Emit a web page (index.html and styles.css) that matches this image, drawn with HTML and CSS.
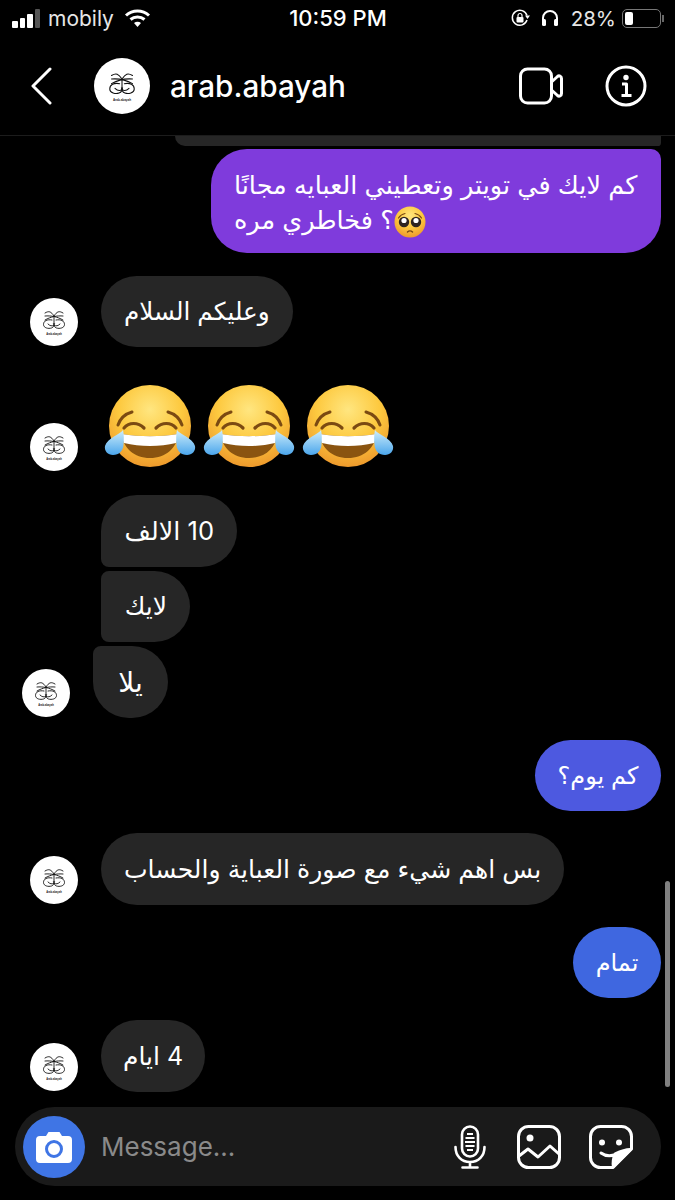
FILE: index.html
```html
<!DOCTYPE html>
<html lang="en">
<head>
    <meta charset="UTF-8">
    <meta name="viewport" content="width=device-width, initial-scale=1.0">
    <title>arab.abayah</title>
    <link rel="stylesheet" href="styles.css">
</head>
<body>
    <!-- Shared drawings -->
    <svg class="defs" width="0" height="0" aria-hidden="true">
        <defs>
            <radialGradient id="faceFill" cx="50%" cy="30%" r="70%">
                <stop offset="0" stop-color="#ffe680"/>
                <stop offset="0.55" stop-color="#fdc93f"/>
                <stop offset="1" stop-color="#ee9a2c"/>
            </radialGradient>
            <linearGradient id="tearFill" x1="0" y1="0" x2="0" y2="1">
                <stop offset="0" stop-color="#cfeefb"/>
                <stop offset="1" stop-color="#4ba6ec"/>
            </linearGradient>
            <symbol id="logo" viewBox="0 0 48 48">
                <g fill="none" stroke="#111" stroke-width="0.9" stroke-linecap="round">
                    <path d="M15 15c4-2.500 6-1.500 9 3 3-4.500 5-5.500 9-3"/>
                    <path d="M15 18c6-.5 12 .5 18 4"/>
                    <path d="M33 18c-6-.5-12 .5-18 4"/>
                    <path d="M22 22c-5-1-8.500 1-8.500 4.500 0 3.500 5 4.500 8 3.500 2-.6 3-2.500 2-4.500"/>
                    <path d="M26 22c5-1 8.500 1 8.500 4.500 0 3.500-5 4.500-8 3.500-2-.6-3-2.500-2-4.500"/>
                    <path d="M24 19v6M18 26c2 2 4 2.500 6 1 2 1.500 4 1 6-1"/>
                </g>
                <text class="logo-name" x="24" y="37" text-anchor="middle">Arab.abayah</text>
            </symbol>
            <symbol id="laugh" viewBox="0 0 92 84">
                <circle cx="46" cy="42" r="41" fill="url(#faceFill)"/>
                <g fill="none" stroke="#7b4a12" stroke-width="3" stroke-linecap="round">
                    <path d="M14 41c2-6 7-11 14-13"/>
                    <path d="M78 41c-2-6-7-11-14-13"/>
                </g>
                <g fill="none" stroke="#7b4a12" stroke-width="3.200" stroke-linecap="round">
                    <path d="M20 44c5-6 14-6 20 0"/>
                    <path d="M52 44c6-6 15-6 20 0"/>
                </g>
                <path d="M18 50c18 3 38 3 56 0-1 14-12 24-28 24S19 64 18 50z" fill="#8a5410"/>
                <path d="M18 50c18 3 38 3 56 0 0 4-1 7-2 9-16 4-36 4-52 0-1-2-2-5-2-9z" fill="#fff"/>
                <path d="M19 46C17 50 3 54 1 62c-1 5 3 9 8 9 6 0 10-4 10.500-10C20 56 20 50 19 46z" fill="url(#tearFill)"/>
                <path d="M73 46c2 4 16 8 18 16 1 5-3 9-8 9-6 0-10-4-10.500-10C72 56 72 50 73 46z" fill="url(#tearFill)"/>
            </symbol>
        </defs>
    </svg>

    <div class="phone">
        <!-- Status bar -->
        <div class="status-bar">
            <div class="status-left">
                <div class="signal">
                    <span class="bar bar-1"></span>
                    <span class="bar bar-2"></span>
                    <span class="bar bar-3"></span>
                    <span class="bar bar-4"></span>
                </div>
                <span class="carrier">mobily</span>
                <svg class="wifi" viewBox="0 0 27 20" width="27" height="20">
                    <g fill="none" stroke="#fff" stroke-width="3">
                        <path d="M2 7.500c6.500-6 16.500-6 23 0"/>
                        <path d="M6.500 11.500c4-3.500 10-3.500 14 0"/>
                    </g>
                    <path d="M10 15c2-1.700 5-1.700 7 0l-3.500 4z" fill="#fff"/>
                </svg>
            </div>
            <div class="clock">10:59 PM</div>
            <div class="status-right">
                <svg class="rotate-lock" viewBox="0 0 20 20" width="20" height="20">
                    <path d="M17 12a7.500 7.500 0 1 1 0-4.500" fill="none" stroke="#fff" stroke-width="1.500"/>
                    <path d="M15 7.500h5l-2.500 3.500z" fill="#fff"/>
                    <rect x="6.500" y="9" width="7" height="5.500" rx="1" fill="#fff"/>
                    <path d="M8 9V7.500a2 2 0 0 1 4 0V9" fill="none" stroke="#fff" stroke-width="1.200"/>
                </svg>
                <svg class="headphones" viewBox="0 0 18 18" width="18" height="18">
                    <path d="M2 12V9a7 7 0 0 1 14 0v3" fill="none" stroke="#fff" stroke-width="2"/>
                    <rect x="1" y="10" width="4" height="7" rx="1.500" fill="#fff"/>
                    <rect x="13" y="10" width="4" height="7" rx="1.500" fill="#fff"/>
                </svg>
                <span class="percent">28%</span>
                <div class="battery"><span class="battery-level"></span></div>
                <span class="battery-tip"></span>
            </div>
        </div>

        <!-- Chat header -->
        <div class="chat-header">
            <svg class="back" viewBox="0 0 22 38" width="22" height="38">
                <path d="M20 2L3 19l17 17" fill="none" stroke="#fff" stroke-width="3" stroke-linecap="round" stroke-linejoin="round"/>
            </svg>
            <svg class="avatar avatar-big"><use href="#logo"/></svg>
            <div class="username">arab.abayah</div>
            <svg class="video" viewBox="0 0 44 38" width="44" height="38">
                <rect x="1.500" y="2" width="31" height="34" rx="7" fill="none" stroke="#fff" stroke-width="3"/>
                <path d="M32.500 15l6-5.500c1.500-1.300 4-.5 4 2v15c0 2.500-2.500 3.300-4 2l-6-5.500" fill="none" stroke="#fff" stroke-width="3"/>
            </svg>
            <svg class="info" viewBox="0 0 42 42" width="42" height="42">
                <circle cx="21" cy="21" r="19" fill="none" stroke="#fff" stroke-width="3"/>
                <circle cx="21" cy="12.500" r="2.700" fill="#fff"/>
                <path d="M17 19h4.500v11M16.500 30.500h10" fill="none" stroke="#fff" stroke-width="3" stroke-linejoin="round"/>
            </svg>
        </div>

        <!-- Messages -->
        <div class="messages">
            <div class="cut-bubble"></div>

            <div class="row row-sent first-sent">
                <div class="bubble bubble-purple bubble-long">
                    <div class="line">كم لايك في تويتر وتعطيني العبايه مجانًا</div>
                    <div class="line">
                        <svg class="pleading" viewBox="0 0 32 32" width="32" height="32">
                            <circle cx="16" cy="16" r="15.500" fill="url(#faceFill)"/>
                            <path d="M4.500 12c1.500-2.500 4-4 6.500-4.500M27.500 12c-1.500-2.500-4-4-6.500-4.500" fill="none" stroke="#7b4a12" stroke-width="1.200" stroke-linecap="round"/>
                            <circle cx="10" cy="16" r="5.200" fill="#2e2420"/>
                            <circle cx="22" cy="16" r="5.200" fill="#2e2420"/>
                            <circle cx="10" cy="14.500" r="2.600" fill="#fff"/>
                            <circle cx="22" cy="14.500" r="2.600" fill="#fff"/>
                            <path d="M13.500 26c1.500-1.500 3.500-1.500 5 0" fill="none" stroke="#7b4a12" stroke-width="1.500" stroke-linecap="round"/>
                        </svg>؟ فخاطري مره
                    </div>
                </div>
            </div>

            <div class="row row-one">
                <svg class="avatar"><use href="#logo"/></svg>
                <div class="bubble bubble-salam">وعليكم السلام</div>
            </div>

            <div class="row row-emoji">
                <svg class="avatar"><use href="#logo"/></svg>
                <div class="emoji-line">
                    <svg class="laugh"><use href="#laugh"/></svg>
                    <svg class="laugh"><use href="#laugh"/></svg>
                    <svg class="laugh"><use href="#laugh"/></svg>
                </div>
            </div>

            <div class="row row-stack">
                <div class="bubble bubble-top">10 الالف</div>
            </div>
            <div class="row row-stack stack-next">
                <div class="bubble bubble-mid">لايك</div>
            </div>
            <div class="row row-shifted">
                <svg class="avatar"><use href="#logo"/></svg>
                <div class="bubble bubble-end">يلا</div>
            </div>

            <div class="row row-sent sent-2">
                <div class="bubble bubble-indigo">كم يوم؟</div>
            </div>

            <div class="row row-bs">
                <svg class="avatar"><use href="#logo"/></svg>
                <div class="bubble bubble-bs">بس اهم شيء مع صورة العباية والحساب</div>
            </div>

            <div class="row row-sent sent-3">
                <div class="bubble bubble-blue">تمام</div>
            </div>

            <div class="row row-last">
                <svg class="avatar"><use href="#logo"/></svg>
                <div class="bubble bubble-days">4 ايام</div>
            </div>

            <div class="scrollbar"></div>
        </div>

        <!-- Message box -->
        <div class="composer">
            <div class="camera">
                <svg viewBox="0 0 36 32" width="36" height="32">
                    <path d="M4 5h6l2.500-4h11L26 5h6a4 4 0 0 1 4 4v19a4 4 0 0 1-4 4H4a4 4 0 0 1-4-4V9a4 4 0 0 1 4-4z" fill="#fff"/>
                    <circle cx="18" cy="18" r="7.500" fill="none" stroke="#3f75e5" stroke-width="3"/>
                </svg>
            </div>
            <div class="placeholder">Message...</div>
            <svg class="mic" viewBox="0 0 32 44" width="32" height="44">
                <rect x="8" y="1.500" width="16" height="30" rx="8" fill="none" stroke="#fff" stroke-width="2.600"/>
                <path d="M13 9h6M11.500 13h9M11 17h10M11.500 21h9M13 25h6" stroke="#fff" stroke-width="1.800"/>
                <path d="M1.500 22c0 9 6 15 14.500 15s14.500-6 14.500-15M16 37v5M8.500 42.500h15" fill="none" stroke="#fff" stroke-width="2.600" stroke-linecap="round"/>
            </svg>
            <svg class="gallery" viewBox="0 0 44 44" width="44" height="44">
                <rect x="1.500" y="1.500" width="41" height="41" rx="10" fill="none" stroke="#fff" stroke-width="3"/>
                <circle cx="13" cy="13" r="3.500" fill="#fff"/>
                <path d="M2 31l9-7 10 8 12-11 9 8" fill="none" stroke="#fff" stroke-width="3" stroke-linejoin="round"/>
            </svg>
            <svg class="sticker" viewBox="0 0 44 44" width="44" height="44">
                <path d="M42.500 24V11.500a10 10 0 0 0-10-10h-21a10 10 0 0 0-10 10v21a10 10 0 0 0 10 10H24z" fill="none" stroke="#fff" stroke-width="3" stroke-linejoin="round"/>
                <path d="M42.500 24L24 42.500c-1-5 0-10 2-14 4-2 11-5 16.500-4.500z" fill="#fff" stroke="#fff" stroke-width="2" stroke-linejoin="round"/>
                <circle cx="13" cy="17.500" r="3" fill="#fff"/>
                <circle cx="30" cy="17.500" r="3" fill="#fff"/>
                <path d="M12 28c4 3 9 3.500 15 1.500" fill="none" stroke="#fff" stroke-width="3" stroke-linecap="round"/>
            </svg>
        </div>
    </div>
</body>
</html>
```

FILE: styles.css
```css
* {
    box-sizing: border-box;
}

body {
    margin: 0;
    background-color: #000;
    color: #fff;
    font-family: Inter, "DejaVu Sans", sans-serif;
}

.defs {
    position: absolute;
}

.logo-name {
    font-family: "Liberation Sans", sans-serif;
    font-size: 2.600px;
    font-weight: bold;
    fill: #222;
}

.phone {
    width: 675px;
    height: 1200px;
    overflow: hidden;
    display: flex;
    flex-direction: column;
}

/* Status bar */
.status-bar {
    height: 36px;
    padding: 0 11px 0 12px;
    display: flex;
    align-items: center;
    justify-content: space-between;
    font-size: 21px;
}

.status-left,
.status-right {
    display: flex;
    align-items: center;
    width: 250px;
}

.status-right {
    justify-content: flex-end;
}

.signal {
    display: flex;
    align-items: flex-end;
    gap: 2px;
    height: 19px;
}

.bar {
    width: 5.500px;
    background-color: #fff;
    border-radius: 1px;
}

.bar-1 { height: 7px; }
.bar-2 { height: 10px; }
.bar-3 { height: 14px; }
.bar-4 { height: 19px; background-color: #555; }

.carrier {
    margin-left: 8px;
    color: #e6e6e6;
}

.wifi {
    margin-left: 10px;
}

.clock {
    font-size: 22px;
    font-weight: 500;
}

.headphones {
    margin-left: 11px;
}

.percent {
    margin-left: 12px;
    font-size: 20.500px;
    color: #e6e6e6;
}

.battery {
    margin-left: 6px;
    width: 39px;
    height: 19px;
    border: 1.500px solid #777;
    border-radius: 5px;
    padding: 2px;
}

.battery-level {
    display: block;
    width: 8px;
    height: 100%;
    background-color: #fff;
    border-radius: 2px;
}

.battery-tip {
    width: 2px;
    height: 7px;
    background-color: #666;
    margin-left: 1px;
}

/* Chat header */
.chat-header {
    height: 100px;
    flex-shrink: 0;
    padding: 0 28px 0 30px;
    display: flex;
    align-items: center;
    border-bottom: 1px solid #1c1c1c;
}

.back {
    margin-right: 42px;
}

.avatar {
    width: 48px;
    height: 48px;
    flex-shrink: 0;
    background-color: #fff;
    border-radius: 50%;
}

.row .avatar {
    margin-bottom: 1px;
}

.avatar-big {
    width: 56px;
    height: 56px;
}

.username {
    margin-left: 20px;
    font-size: 29.700px;
    font-weight: 500;
    flex-grow: 1;
}

.video {
    margin-right: 42px;
}

/* Messages */
.messages {
    position: relative;
    flex-grow: 1;
    min-height: 0;
    overflow: hidden;
    padding: 0 14px 0 30px;
}

.cut-bubble {
    height: 10px;
    margin-left: 145px;
    background-color: #262626;
    border-radius: 0 0 10px 30px;
}

.row {
    display: flex;
    align-items: flex-end;
    gap: 23px;
}

.row-sent {
    justify-content: flex-end;
}

.bubble {
    height: 71.500px;
    padding: 0 23px;
    display: flex;
    align-items: center;
    background-color: #262626;
    border-radius: 36px;
    font-size: 25px;
    direction: rtl;
    white-space: nowrap;
}

.row-stack {
    padding-left: 71px;
}

.first-sent { margin-top: 3px; }
.row-one { margin-top: 22.500px; }
.row-emoji { margin-top: 37px; }
.row-stack { margin-top: 23px; }
.stack-next { margin-top: 4px; }
.sent-2 { margin-top: 22px; }
.row-bs { margin-top: 22px; }
.sent-3 { margin-top: 22px; }
.row-last { margin-top: 22px; }

.row-shifted {
    margin-top: 4px;
    margin-left: -8px;
}

.bubble-purple {
    background-color: #7f3bdc;
    border-radius: 36px 10px 36px 36px;
}

.bubble-long {
    display: block;
    padding: 18px 23px;
    width: 450px;
    height: 104px;
    font-size: 25.500px;
}

.line {
    text-align: left;
    height: 35px;
    line-height: 35px;
}

.pleading {
    vertical-align: -9px;
}

.bubble-salam {
    font-size: 24.700px;
}

.bubble-bs {
    font-size: 25.100px;
}

.bubble-days {
    width: 104px;
    justify-content: center;
    padding: 0;
}

.bubble-indigo {
    width: 126px;
    justify-content: center;
    padding: 0;
    font-size: 24px;
    background-color: #4d59e0;
}

.bubble-blue {
    width: 88px;
    justify-content: center;
    padding: 0;
    font-size: 24px;
    background-color: #3f67e0;
}

.bubble-top {
    width: 136px;
    border-radius: 36px 36px 36px 8px;
    font-size: 25.500px;
}

.bubble-mid {
    width: 89px;
    border-radius: 8px 36px 36px 8px;
}

.bubble-end {
    width: 75px;
    justify-content: center;
    padding: 0;
    font-size: 28px;
    border-radius: 8px 36px 36px 36px;
}

.emoji-line {
    display: flex;
    gap: 7px;
    margin-left: 3px;
    margin-bottom: 4px;
}

.laugh {
    width: 92px;
    height: 84px;
}

.scrollbar {
    position: absolute;
    right: 5px;
    top: 745px;
    width: 5px;
    height: 206px;
    background-color: #808080;
    border-radius: 3px;
}

/* Message box */
.composer {
    height: 79px;
    margin: 0 14px 14px 15px;
    flex-shrink: 0;
    padding: 0 28px 0 8px;
    display: flex;
    align-items: center;
    background-color: #1a1a1a;
    border-radius: 40px;
}

.camera {
    width: 62px;
    height: 62px;
    flex-shrink: 0;
    display: flex;
    align-items: center;
    justify-content: center;
    background-color: #3f75e5;
    border-radius: 50%;
}

.placeholder {
    margin-left: 16px;
    flex-grow: 1;
    font-size: 26px;
    color: #8a8a8a;
}

.gallery {
    margin-left: 31px;
}

.sticker {
    margin-left: 28px;
}
```
